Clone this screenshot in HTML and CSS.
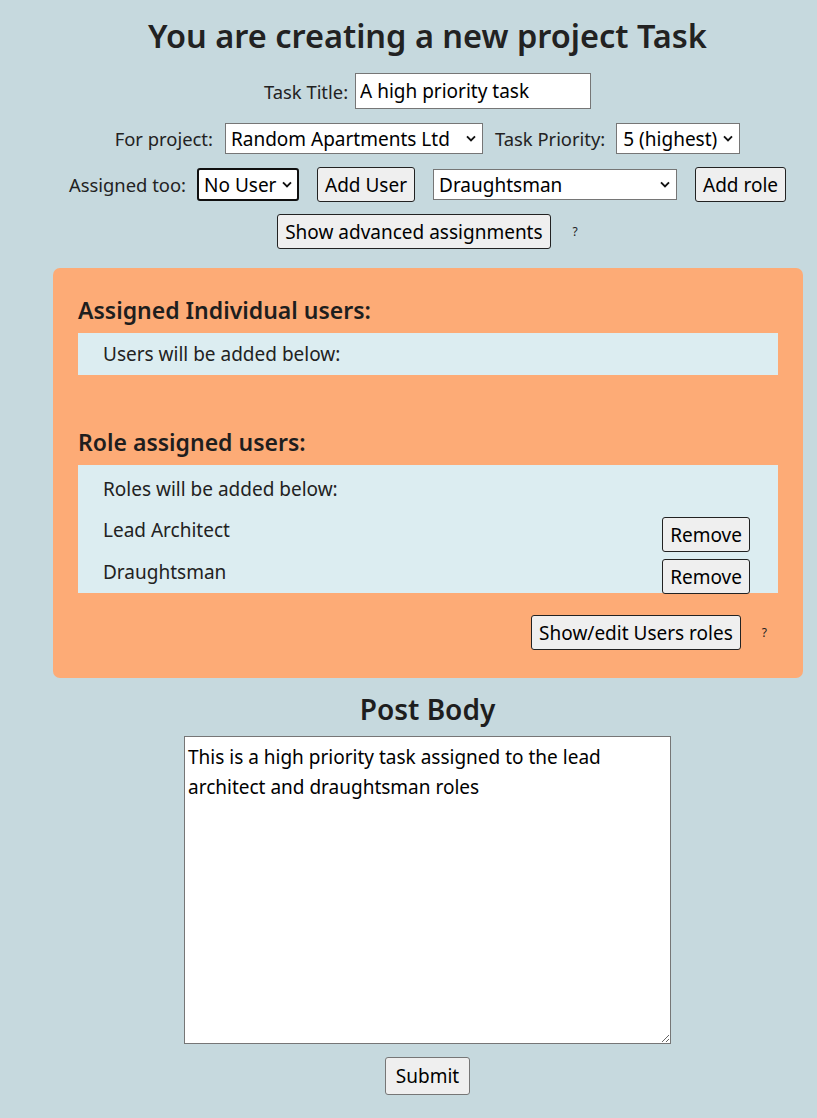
FILE: index.html
```html
<!DOCTYPE html>
<html>
<head>
<meta charset="utf-8">
<link rel="stylesheet" href="styles.css">
</head>
<body>
<main class="page">
  <h1 class="title">You are creating a new project Task</h1>
  <div class="row row-title">
    <label class="lbl">Task Title:</label>
    <input class="text-input" type="text" value="A high priority task">
  </div>
  <div class="row row-project">
    <label class="lbl">For project:</label>
    <select class="sel sel-project"><option>Random Apartments Ltd</option></select>
    <label class="lbl">Task Priority:</label>
    <select class="sel sel-priority"><option>5 (highest)</option></select>
  </div>
  <div class="row row-assign">
    <label class="lbl">Assigned too:</label>
    <select class="sel sel-user"><option>No User</option></select>
    <button class="btn">Add User</button>
    <select class="sel sel-role"><option>Draughtsman</option></select>
    <button class="btn">Add role</button>
  </div>
  <div class="row row-adv">
    <button class="btn">Show advanced assignments</button>
    <span class="help">?</span>
  </div>

  <section class="panel">
    <h3 class="panel-h">Assigned Individual users:</h3>
    <div class="list list-users">
      <div class="list-note">Users will be added below:</div>
    </div>
    <h3 class="panel-h panel-h2">Role assigned users:</h3>
    <div class="list list-roles">
      <div class="list-note">Roles will be added below:</div>
      <div class="role-row">
        <span class="role-name">Lead Architect</span>
        <button class="btn">Remove</button>
      </div>
      <div class="role-row">
        <span class="role-name">Draughtsman</span>
        <button class="btn">Remove</button>
      </div>
    </div>
    <div class="panel-foot">
      <button class="btn">Show/edit Users roles</button>
      <span class="help">?</span>
    </div>
  </section>

  <h2 class="post-h">Post Body</h2>
  <div class="post-wrap">
    <textarea class="post-body">This is a high priority task assigned to the lead architect and draughtsman roles</textarea>
  </div>
  <div class="submit-row">
    <button class="btn btn-submit">Submit</button>
  </div>
</main>
</body>
</html>
```

FILE: styles.css
```css
html, body {
  margin: 0;
  padding: 0;
  background: #c6d9de;
}
body {
  font-family: "Noto Sans", "Open Sans", sans-serif;
  color: #1e1e1e;
  font-size: 19px;
}
.page {
  padding-left: 38px;
  display: flex;
  flex-direction: column;
  align-items: center;
}
.title {
  font-size: 32.5px;
  font-weight: 600;
  margin: 14px 0 15px;
  line-height: 44px;
  color: #222;
}
.row {
  display: flex;
  align-items: center;
  justify-content: center;
}
.lbl {
  font-size: 18.4px;
  color: #222;
}
.row-title { gap: 7px; height: 36px; }
.row-project { gap: 12px; margin-top: 14px; height: 31px; }
.row-project .sel-priority { margin-left: -1px; }
.row-assign { gap: 18px; margin-top: 13px; height: 35px; }
.row-assign .lbl { margin-right: -7px; }
.row-adv { gap: 22px; margin-top: 12px; height: 35px; }

.text-input {
  font-family: inherit;
  font-size: 19px;
  width: 236px;
  height: 36px;
  box-sizing: border-box;
  border: 1px solid #767676;
  padding: 0 4px;
  background: #fff;
  color: #000;
}
.sel {
  -webkit-appearance: none;
  appearance: none;
  font-family: inherit;
  font-size: 19px;
  height: 31px;
  box-sizing: border-box;
  border: 1px solid #767676;
  border-radius: 0;
  background-color: #fff;
  background-image: url("data:image/svg+xml,%3Csvg xmlns='http://www.w3.org/2000/svg' width='10' height='7' viewBox='0 0 10 7'%3E%3Cpath d='M1 1.3l4 4 4-4' fill='none' stroke='%23111' stroke-width='1.9'/%3E%3C/svg%3E");
  background-repeat: no-repeat;
  background-position: right 6px center;
  color: #000;
  padding: 0 20px 0 5px;
}
.sel-project { width: 258px; }
.sel-priority { width: 124px; padding-left: 6px; }
.sel-user {
  width: 102px;
  height: 33px;
  border: 2px solid #101010;
  border-radius: 3px;
  padding-left: 5px;
  background-position: right 5px center;
}
.sel-role { width: 244px; }

.btn {
  font-family: inherit;
  font-size: 19px;
  color: #000;
  background: #efefef;
  border: 1px solid #222;
  border-radius: 3px;
  padding: 0 7px;
  height: 35px;
}
.help {
  font-size: 12px;
  color: #222;
}

.panel {
  align-self: stretch;
  margin: 19px 14px 0 15px;
  background: #fdab76;
  border-radius: 7px;
  padding: 22px 25px 28px;
}
.panel-h {
  margin: 0;
  font-size: 23px;
  font-weight: 600;
  line-height: 40px;
  color: #1e1e1e;
}
.panel-h2 { margin-top: 47px; }
.list {
  background: #dcedf1;
  margin-top: 3px;
  padding-left: 25px;
  padding-right: 28px;
}
.list-users {
  height: 42px;
  display: flex;
  align-items: center;
}
.list-roles {
  box-sizing: border-box;
  height: 128px;
  padding-top: 12px;
}
.list-note { font-size: 19px; line-height: 24px; color: #222; }
.role-row {
  display: flex;
  justify-content: space-between;
  align-items: flex-start;
  margin-bottom: 7px;
  height: 35px;
}
.list-note + .role-row { margin-top: 16px; }
.role-name { line-height: 24px; padding-top: 1px; color: #222; }
.panel-foot {
  display: flex;
  justify-content: flex-end;
  align-items: center;
  gap: 21px;
  margin-top: 22px;
  padding-right: 11px;
}

.post-h {
  margin: 12px 0 8px;
  font-size: 28px;
  font-weight: 600;
  line-height: 38px;
}
.post-body {
  font-family: inherit;
  font-size: 19px;
  line-height: 30px;
  width: 487px;
  height: 308px;
  box-sizing: border-box;
  border: 1px solid #767676;
  padding: 5px 3px;
  background: #fff;
  color: #000;
  display: block;
}
.submit-row { margin-top: 13px; }
.btn-submit {
  height: 38px;
  padding: 0 10px;
  border-color: #767676;
}
```
